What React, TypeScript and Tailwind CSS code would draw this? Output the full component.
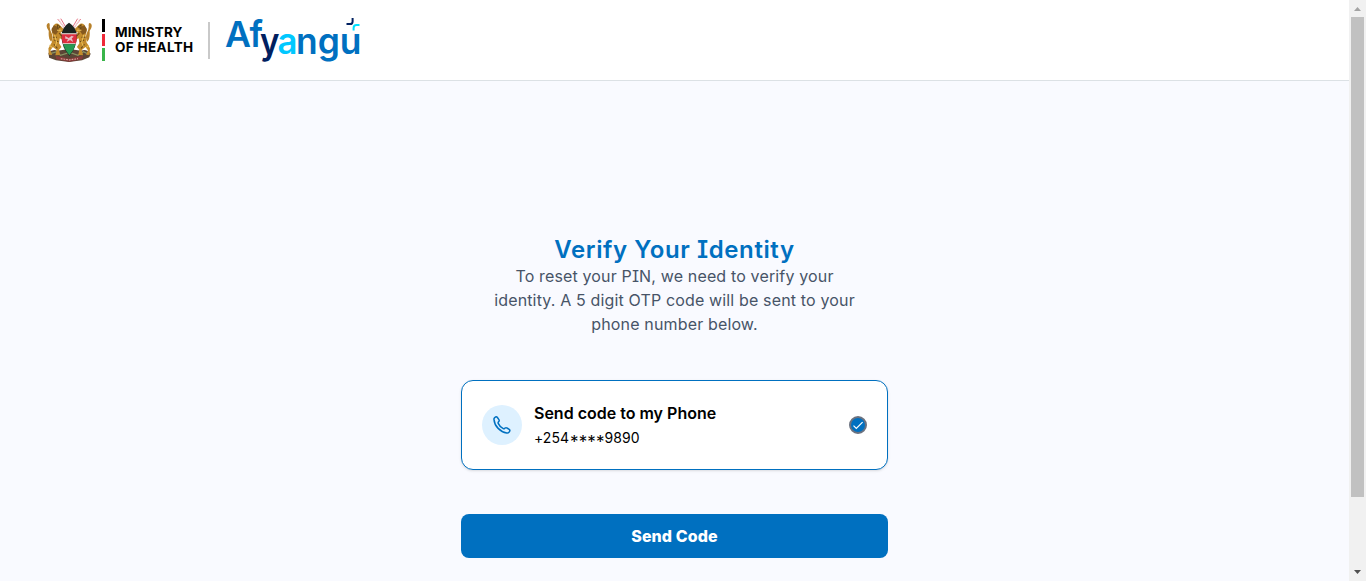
import React from "react";

function Lion({ flip = false }: { flip?: boolean }) {
  return (
    <g transform={flip ? "translate(173 0) scale(-1 1)" : undefined}>
      <path d="M53 28 L68 48 L75 62 M62 27 L78 55" stroke="#e0566a" strokeWidth="2.5" fill="none" />
      <path d="M56 29 L72 55" stroke="#f4dada" strokeWidth="3" fill="none" />
      <path d="M27 64 Q17 50 23 42 Q30 37 30 47 Q28 58 36 72 Q40 86 34 96 Q25 88 27 64Z" fill="#b8812a" />
      <path d="M42 46 Q50 38 58 45 L68 56 L77 62 L72 69 L61 66 L67 78 L75 84 L70 91 L59 86 L57 101 L64 112 L57 120 L60 136 L46 137 L50 121 L39 112 L32 122 L37 136 L27 135 L26 116 L36 98 L39 78 L35 62Z" fill="#c48c2c" />
      <path d="M42 47 L54 52 L57 61 L48 75 L38 70 L35 58Z" fill="#85591f" />
      <path d="M52 46 L60 52 L53 56Z M57 70 L64 79 M43 91 L55 96 M42 104 L52 116 M39 83 L51 83" fill="#e9bd4c" stroke="#684717" strokeWidth="3" />
      <path d="M44 76 L50 98 L45 111 M29 106 L36 113 M51 62 L64 62" stroke="#edc25b" strokeWidth="3" fill="none" />
    </g>
  );
}

function CoatOfArms() {
  return (
    <svg viewBox="19 22 137 138" className="h-[46px] w-[46px] shrink-0" aria-label="Coat of arms of Kenya">
      <g transform="translate(-1 0) scale(1.03 1)">
        <path d="M26 130 Q38 116 52 123 L86 118 L122 123 Q137 117 149 132 L145 143 L124 152 L86 157 L48 152 L28 144Z" fill="#5b4535" />
        <path d="M31 132 L51 126 L61 137 L88 128 L112 137 L128 126 L144 134" stroke="#889362" strokeWidth="4" fill="none" />
        <Lion />
        <Lion flip />
        <path d="M86 39 Q107 52 109 78 Q109 112 87 139 Q64 112 64 78 Q66 52 86 39Z" fill="#1c2420" />
        <path d="M65 73 H108 Q110 87 106 102 H68 Q63 88 65 73Z" fill="#dc2f40" />
        <path d="M65 72 H108 M68 102 H105" stroke="#f4e9e5" strokeWidth="3" />
        <path d="M69 104 H105 Q100 123 87 137 Q74 122 69 104Z" fill="#279a52" />
        <path d="M75 79 L85 85 L94 78 L100 81 L94 86 L98 97 L89 91 L79 97 L83 88 L75 87Z" fill="#e6bcc2" />
        <path d="M47 139 L65 142 L86 147 L108 142 L127 139 L124 149 L87 156 L49 149Z" fill="#873a3a" />
        <path d="M62 147 L86 151 L112 147" stroke="#deb5a7" strokeWidth="3" strokeDasharray="5 3" fill="none" />
      </g>
    </svg>
  );
}

function Wordmark() {
  return (
    <svg viewBox="0 0 136 48" className="ml-[15px] h-12 w-[136px] overflow-visible" aria-label="Afyangu">
      <g fontFamily="Inter, sans-serif" fontWeight="600" fontSize="35.5">
        <text x="0" y="30.8" textLength="26" lengthAdjust="spacingAndGlyphs" fontSize="36" fill="#0070c0">A</text>
        <text x="24.5" y="30.8" textLength="13.5" lengthAdjust="spacingAndGlyphs" fontSize="37" fill="#0070c0">f</text>
        <text x="35" y="37.8" textLength="19.5" lengthAdjust="spacingAndGlyphs" fill="#002060">y</text>
        <text x="52.5" y="37.8" textLength="20" lengthAdjust="spacingAndGlyphs" fill="#00c8ff">a</text>
        <text x="71" y="37.8" textLength="65.5" lengthAdjust="spacingAndGlyphs" fill="#0070c0">ngu</text>
      </g>
      <path d="M121.5 8 H125 Q127.6 8 127.6 5.4 V2" stroke="#002060" strokeWidth="2" fill="none" />
      <path d="M128.6 14.5 V12 Q128.6 9 131.5 9 H134.5" stroke="#00e0ff" strokeWidth="2" fill="none" />
    </svg>
  );
}

function PhoneIcon() {
  return (
    <svg viewBox="0 0 20 20" className="size-5" fill="none" stroke="currentColor" strokeWidth="1.5" strokeLinecap="round" strokeLinejoin="round">
      <path d="M2 4.6 Q1.7 3.4 2.7 2.6 L3.5 2 Q4.6 1.4 5.4 2.5 L6.9 4.6 Q7.6 5.6 6.8 6.6 L6.2 7.3 Q5.9 7.8 6.2 8.4 Q7.7 11.8 11.3 13.7 Q11.9 14 12.4 13.6 L13.1 13 Q14 12.3 15 13 L17.2 14.4 Q18.3 15.2 17.6 16.3 L17 17.2 Q16.1 18.2 14.7 17.9 C8.3 17 2.5 11.2 2 4.6Z" />
    </svg>
  );
}

export default function App() {
  return (
    <div className="flex h-[581px] overflow-hidden bg-[#f9faff] font-['Inter',sans-serif]">
      <div className="flex min-w-0 flex-1 flex-col">
        <header className="flex h-[81px] shrink-0 items-center border-b border-[#dce1e5] bg-white pl-[46px]">
          <CoatOfArms />
          <div className="ml-[10px] flex h-[42px] w-[2.5px] shrink-0 flex-col gap-[2px]">
            <i className="flex-1 bg-black" />
            <i className="flex-1 bg-[#ef2938]" />
            <i className="flex-1 bg-[#39b54a]" />
          </div>
          <div className="ml-[10.5px] w-[79px] whitespace-nowrap text-[13.5px] leading-[15px] font-bold text-black">
            <div className="tracking-[0.1px]">MINISTRY</div>
            <div className="tracking-[0.35px]">OF HEALTH</div>
          </div>
          <div className="ml-[14px] h-[37px] w-[2px] bg-[#c9c9c9]" />
          <Wordmark />
        </header>

        <main className="flex flex-1 flex-col items-center pt-[153px]">
          <h1 className="h-[30px] whitespace-nowrap text-[24px] leading-[32px] font-semibold tracking-[0.6px] text-[#0070c0] [font-feature-settings:'cv08']">Verify Your Identity</h1>
          <div className="whitespace-nowrap text-center text-[16px] leading-6 text-[#475467] [font-feature-settings:'cv08']">
            <p className="tracking-[0.15px]">To reset your PIN, we need to verify your</p>
            <p className="tracking-[0.15px]">identity. A 5 digit OTP code will be sent to your</p>
            <p className="tracking-[0.15px]">phone number below.</p>
          </div>
          <button className="mt-[44px] flex h-[90px] w-[427px] shrink-0 items-center rounded-xl border border-[#0070c0] bg-white px-5 text-left text-black shadow-sm">
            <span className="flex size-10 items-center justify-center rounded-full bg-[#def1ff] text-[#0070c0]">
              <PhoneIcon />
            </span>
            <span className="ml-3 flex-1 pt-[2px]">
              <span className="block text-[16px] leading-6 font-semibold">Send code to my Phone</span>
              <span className="flex text-[14px] leading-[26px] tracking-[0.05px]">
                <span>+254</span>
                <span className="translate-y-[4px] pl-px text-[17px] tracking-[0.1px]">****</span>
                <span>9890</span>
              </span>
            </span>
            <svg viewBox="0 0 18 18" className="size-[18px]">
              <circle cx="9" cy="9" r="8" fill="#0070c0" stroke="#6b7280" strokeWidth="2" />
              <path d="M4.5 9.7 L7.3 12.5 L13.6 6.2" stroke="white" strokeWidth="1.2" fill="none" />
            </svg>
          </button>
          <button className="mt-[44px] h-11 w-[427px] shrink-0 rounded-lg bg-[#0070c0] text-[16px] font-extrabold tracking-[0.1px] text-white">Send Code</button>
        </main>
      </div>
      <div className="flex w-[17px] flex-col items-center bg-[#f1f1f1]">
        <svg viewBox="0 0 17 17" className="size-[17px] shrink-0"><path d="M5 11 H12 L8.5 7Z" fill="#a3a3a3" /></svg>
        <div className="h-[480px] w-[13px] bg-[#c1c1c1]" />
        <div className="flex-1" />
        <svg viewBox="0 0 17 17" className="size-[17px] shrink-0"><path d="M5 6 H12 L8.5 10Z" fill="#505050" /></svg>
      </div>
    </div>
  );
}
